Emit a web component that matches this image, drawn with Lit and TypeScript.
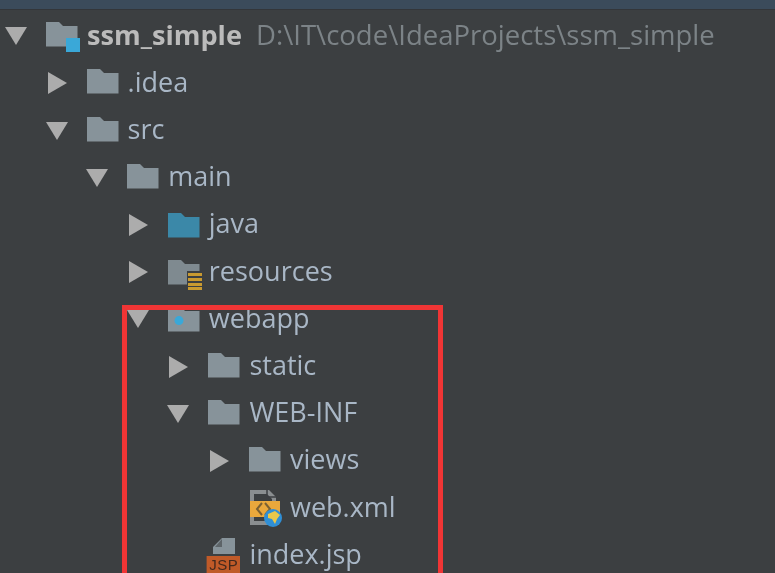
import { LitElement, css, html, svg } from 'lit';
import { customElement } from 'lit/decorators.js';

type IconKind = 'root' | 'folder' | 'java' | 'resources' | 'webapp' | 'xml' | 'jsp';

interface TreeRow {
  depth: number;
  label: string;
  icon: IconKind;
  arrow?: 'open' | 'closed';
  hint?: string;
}

const ROWS: TreeRow[] = [
  { depth: 0, label: 'ssm_simple', icon: 'root', arrow: 'open', hint: 'D:\\IT\\code\\IdeaProjects\\ssm_simple' },
  { depth: 1, label: '.idea', icon: 'folder', arrow: 'closed' },
  { depth: 1, label: 'src', icon: 'folder', arrow: 'open' },
  { depth: 2, label: 'main', icon: 'folder', arrow: 'open' },
  { depth: 3, label: 'java', icon: 'java', arrow: 'closed' },
  { depth: 3, label: 'resources', icon: 'resources', arrow: 'closed' },
  { depth: 3, label: 'webapp', icon: 'webapp', arrow: 'open' },
  { depth: 4, label: 'static', icon: 'folder', arrow: 'closed' },
  { depth: 4, label: 'WEB-INF', icon: 'folder', arrow: 'open' },
  { depth: 5, label: 'views', icon: 'folder', arrow: 'closed' },
  { depth: 5, label: 'web.xml', icon: 'xml' },
  { depth: 4, label: 'index.jsp', icon: 'jsp' },
];

const FOLDER = 'M0 3H13L17 7H31.5V27.5H0Z';

function iconBody(kind: IconKind) {
  switch (kind) {
    case 'root':
      return svg`<path d=${FOLDER} fill="#87939a"/><rect x="20" y="19" width="14" height="14" fill="#3aa8d8"/>`;
    case 'folder':
      return svg`<path d=${FOLDER} fill="#87939a"/>`;
    case 'java':
      return svg`<g transform="translate(0 2)"><path d=${FOLDER} fill="#3b88a8"/></g>`;
    case 'resources':
      return svg`<g transform="translate(0 2)"><path d=${FOLDER} fill="#7f8a90"/>
        <rect x="19" y="14" width="16" height="20" fill="#3c3f41"/>
        <path d="M20 17.5H34M20 22.5H34M20 27.5H34M20 31.5H34" stroke="#c99a30" stroke-width="3"/></g>`;
    case 'webapp':
      return svg`<g transform="translate(0 2)"><path d=${FOLDER} fill="#87939a"/><circle cx="11" cy="16.6" r="4.5" fill="#3aa8d8"/></g>`;
    case 'xml':
      return svg`<path d="M1 -1H20L27 6V34H1Z" fill="#8a8e90"/>
        <path d="M5 3H18L23 8V30H5Z" fill="#3c3f41"/>
        <path d="M18 -1V6H27" fill="none" stroke="#3c3f41" stroke-width="1.5"/>
        <rect x="1" y="10" width="30" height="16" fill="#eaa83c"/>
        <path d="M13 12L8 18L13 24M16 12L21 18L16 24" fill="none" stroke="#7a6033" stroke-width="2"/>
        <circle cx="24" cy="27" r="9" fill="#2f8fd6"/>
        <path d="M19 23L26 20L31 24L28 28L26 33L23 28L19 27Z" fill="#e8c74a"/>`;
    case 'jsp':
      return svg`<path d="M14 0H27V16H5V9Z" fill="#87939a"/>
        <path d="M14 1L7 9H14Z" fill="#5d6468"/>
        <rect x="-1.4" y="18" width="33.4" height="19" fill="#c05a28"/>`;
  }
}

@customElement('app-root')
export class AppRoot extends LitElement {
  static override styles = css`
    :host {
      display: block;
      position: relative;
      width: 775px;
      height: 573px;
      overflow: hidden;
      background: #3c3f41;
      font-family: 'Open Sans', sans-serif;
    }

    .topbar {
      height: 9px;
      background: #3b4b5b;
      border-bottom: 1px solid #33363a;
    }

    .tree {
      display: grid;
      grid-auto-rows: 47.2px;
      padding-top: 2.6px;
      filter: blur(0.6px);
    }

    .row {
      display: flex;
      align-items: center;
      white-space: nowrap;
    }

    .arrow {
      flex: none;
      width: 22px;
      height: 22px;
      margin-right: 19px;
    }

    .icon {
      flex: none;
      position: relative;
      width: 34px;
      height: 36px;
      margin-right: 7px;
    }

    .icon svg {
      display: block;
      width: 34px;
      height: 36px;
      overflow: visible;
    }

    .label {
      font-size: 27px;
      line-height: 36px;
      padding-bottom: 3px;
      color: #a9b7c6;
    }

    .label.project {
      font-size: 27.2px;
      font-weight: 700;
      color: #bbbbbb;
    }

    .hint {
      font-size: 27.5px;
      line-height: 36px;
      padding-bottom: 3px;
      margin-left: 14px;
      color: #7c8387;
    }

    .jsp {
      position: absolute;
      left: -1.4px;
      top: 19px;
      width: 33.4px;
      text-align: center;
      font-family: 'Liberation Sans', sans-serif;
      font-size: 15px;
      line-height: 18px;
      letter-spacing: 0.5px;
      color: #43291c;
    }

    .highlight {
      position: absolute;
      left: 122px;
      top: 305px;
      width: 321px;
      height: 290px;
      box-sizing: border-box;
      border: 5px solid #f03535;
    }
  `;

  private renderArrow(arrow?: 'open' | 'closed') {
    if (!arrow) return html`<span class="arrow"></span>`;
    const points = arrow === 'open' ? '0,2 22,2 11,20' : '2,0 21,11 2,22';
    return html`<svg class="arrow" viewBox="0 0 22 22"><polygon points=${points} fill="#acacac"/></svg>`;
  }

  private renderRow(row: TreeRow) {
    return html`
      <div class="row" style="padding-left:${5 + row.depth * 40.6}px">
        ${this.renderArrow(row.arrow)}
        <span class="icon">
          <svg viewBox="0 0 34 36"><g transform="translate(0 1)">${iconBody(row.icon)}</g></svg>
          ${row.icon === 'jsp' ? html`<span class="jsp">JSP</span>` : ''}
        </span>
        <span class="label ${row.depth === 0 ? 'project' : ''}">${row.label}</span>
        ${row.hint ? html`<span class="hint">${row.hint}</span>` : ''}
      </div>
    `;
  }

  override render() {
    return html`
      <div class="topbar"></div>
      <div class="tree">${ROWS.map((row) => this.renderRow(row))}</div>
      <div class="highlight"></div>
    `;
  }
}
